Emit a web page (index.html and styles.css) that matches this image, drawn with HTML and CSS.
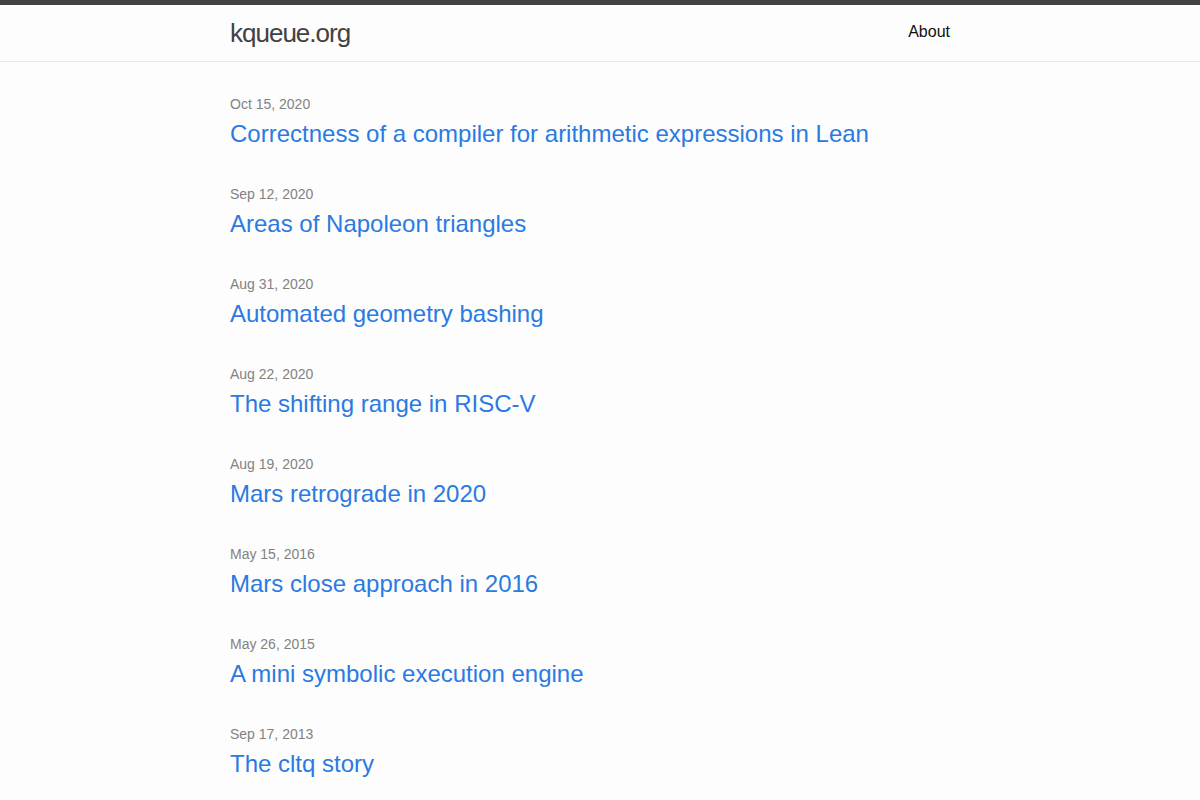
FILE: index.html
```html
<!DOCTYPE html>
<html lang="en">
<head>
    <meta charset="UTF-8">
    <meta name="viewport" content="width=device-width, initial-scale=1.0">
    <title>kqueue.org</title>
    <link rel="stylesheet" href="styles.css">
</head>
<body>
    <header class="site-header">
        <div class="wrapper header-inner">
            <a class="site-title" href="#">kqueue.org</a>
            <nav class="site-nav">
                <a class="page-link" href="#">About</a>
            </nav>
        </div>
    </header>

    <main class="page-content">
        <div class="wrapper">
            <ul class="post-list">
                <li>
                    <span class="post-meta">Oct 15, 2020</span>
                    <h2><a class="post-link" href="#">Correctness of a compiler for arithmetic expressions in Lean</a></h2>
                </li>
                <li>
                    <span class="post-meta">Sep 12, 2020</span>
                    <h2><a class="post-link" href="#">Areas of Napoleon triangles</a></h2>
                </li>
                <li>
                    <span class="post-meta">Aug 31, 2020</span>
                    <h2><a class="post-link" href="#">Automated geometry bashing</a></h2>
                </li>
                <li>
                    <span class="post-meta">Aug 22, 2020</span>
                    <h2><a class="post-link" href="#">The shifting range in RISC-V</a></h2>
                </li>
                <li>
                    <span class="post-meta">Aug 19, 2020</span>
                    <h2><a class="post-link" href="#">Mars retrograde in 2020</a></h2>
                </li>
                <li>
                    <span class="post-meta">May 15, 2016</span>
                    <h2><a class="post-link" href="#">Mars close approach in 2016</a></h2>
                </li>
                <li>
                    <span class="post-meta">May 26, 2015</span>
                    <h2><a class="post-link" href="#">A mini symbolic execution engine</a></h2>
                </li>
                <li>
                    <span class="post-meta">Sep 17, 2013</span>
                    <h2><a class="post-link" href="#">The cltq story</a></h2>
                </li>
            </ul>
        </div>
    </main>
</body>
</html>
```

FILE: styles.css
```css
body {
    margin: 0;
    padding: 0;
    font-family: "Liberation Sans", Arial, sans-serif;
    font-size: 16px;
    line-height: 1.5;
    color: #111;
    background: #fdfdfd;
}

a {
    text-decoration: none;
}

.wrapper {
    max-width: 740px;
    margin: 0 auto;
    padding: 0 30px;
}

.site-header {
    border-top: 5px solid #424242;
    border-bottom: 1px solid #e8e8e8;
    min-height: 56px;
}

.header-inner {
    display: flex;
    justify-content: space-between;
    align-items: center;
    height: 56px;
}

.site-title {
    font-size: 26px;
    letter-spacing: -1px;
    line-height: 56px;
    color: #424242;
}

.site-nav {
    padding: 0 20px 3px 0;
}

.page-link {
    color: #111;
    line-height: 1.5;
}

.page-content {
    padding: 31px 0;
}

.post-list {
    list-style: none;
    margin: 0;
    padding: 0;
}

.post-list li {
    margin-bottom: 31px;
}

.post-meta {
    display: block;
    font-size: 14px;
    line-height: 23px;
    color: #828282;
}

.post-list h2 {
    margin: 0;
    font-size: 24px;
    font-weight: normal;
    line-height: 36px;
}

.post-link {
    color: #2a7ae2;
}
```
